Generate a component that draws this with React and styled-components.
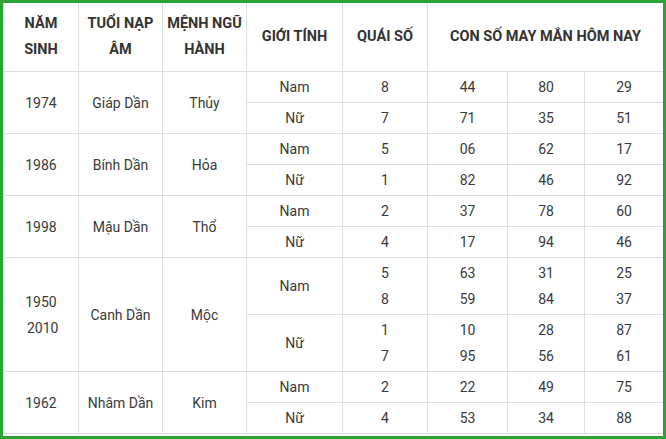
import React from 'react';
import styled, { createGlobalStyle } from 'styled-components';

const GlobalStyle = createGlobalStyle`
  html, body {
    margin: 0;
    padding: 0;
    background: #ffffff;
  }
  body {
    font-family: Roboto, "Liberation Sans", Arial, sans-serif;
  }
`;

const Frame = styled.div`
  width: 666px;
  height: 439px;
  box-sizing: border-box;
  border: 3px solid #2ea238;
  background: #fff;
  overflow: hidden;
`;

const Table = styled.table`
  width: 660px;
  border-collapse: collapse;
  table-layout: fixed;
  font-size: 14px;
  color: #3a3a3a;
`;

const HeadCell = styled.th`
  height: 68px;
  padding: 0 2px;
  border: 1px solid #dedede;
  border-top: none;
  font-size: 14.5px;
  font-weight: 700;
  color: #333;
  line-height: 26px;
  text-align: center;
  vertical-align: middle;
`;

const Cell = styled.td`
  height: ${(p) => (p.$tall ? 56 : 30)}px;
  padding: 0;
  border: 1px solid #dedede;
  text-align: center;
  vertical-align: middle;
  line-height: 26px;
  white-space: pre;
`;

const data = [
  {
    year: '1974', tuoi: 'Giáp Dần', menh: 'Thủy',
    rows: [
      { g: 'Nam', q: '8', n: ['44', '80', '29'] },
      { g: 'Nữ', q: '7', n: ['71', '35', '51'] },
    ],
  },
  {
    year: '1986', tuoi: 'Bính Dần', menh: 'Hỏa',
    rows: [
      { g: 'Nam', q: '5', n: ['06', '62', '17'] },
      { g: 'Nữ', q: '1', n: ['82', '46', '92'] },
    ],
  },
  {
    year: '1998', tuoi: 'Mậu Dần', menh: 'Thổ',
    rows: [
      { g: 'Nam', q: '2', n: ['37', '78', '60'] },
      { g: 'Nữ', q: '4', n: ['17', '94', '46'] },
    ],
  },
  {
    year: '1950\n 2010', tuoi: 'Canh Dần', menh: 'Mộc', tall: true,
    rows: [
      { g: 'Nam', q: '5\n8', n: ['63\n59', '31\n84', '25\n37'] },
      { g: 'Nữ', q: '1\n7', n: ['10\n95', '28\n56', '87\n61'] },
    ],
  },
  {
    year: '1962', tuoi: 'Nhâm Dần', menh: 'Kim',
    rows: [
      { g: 'Nam', q: '2', n: ['22', '49', '75'] },
      { g: 'Nữ', q: '4', n: ['53', '34', '88'] },
    ],
  },
];

const widths = [75, 84, 84, 96, 85, 80, 77, 79];

export default function App() {
  return (
    <>
      <GlobalStyle />
      <Frame>
        <Table>
          <colgroup>
            {widths.map((w, i) => <col key={i} style={{ width: w }} />)}
          </colgroup>
          <thead>
            <tr>
              <HeadCell>NĂM<br />SINH</HeadCell>
              <HeadCell>TUỔI NẠP<br />ÂM</HeadCell>
              <HeadCell>MỆNH NGŨ<br />HÀNH</HeadCell>
              <HeadCell>GIỚI TÍNH</HeadCell>
              <HeadCell>QUÁI SỐ</HeadCell>
              <HeadCell colSpan={3}>CON SỐ MAY MẮN HÔM NAY</HeadCell>
            </tr>
          </thead>
          <tbody>
            {data.map((d) =>
              d.rows.map((r, i) => (
                <tr key={d.year + r.g}>
                  {i === 0 && (
                    <>
                      <Cell rowSpan={2}>{d.year}</Cell>
                      <Cell rowSpan={2}>{d.tuoi}</Cell>
                      <Cell rowSpan={2}>{d.menh}</Cell>
                    </>
                  )}
                  <Cell $tall={d.tall}>{r.g}</Cell>
                  <Cell $tall={d.tall}>{r.q}</Cell>
                  {r.n.map((n, k) => <Cell key={k} $tall={d.tall}>{n}</Cell>)}
                </tr>
              ))
            )}
          </tbody>
        </Table>
      </Frame>
    </>
  );
}
